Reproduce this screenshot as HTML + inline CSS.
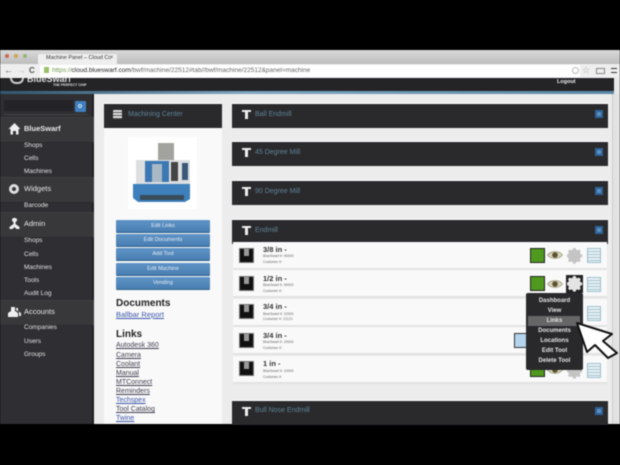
<!DOCTYPE html>
<html><head><meta charset="utf-8"><style>
html,body{margin:0;padding:0;background:#000}
#p{position:relative;width:620px;height:465px;overflow:hidden;background:#000;font-family:"Liberation Sans",sans-serif;filter:blur(.45px)}
#p div,#p a{position:absolute;white-space:nowrap}
.side{color:#e2e2e2;font-size:6.5px;line-height:10px;left:24px}
.main{color:#e8e8e8;font-size:7.500px;line-height:12px;left:24px}
.sec{left:0;width:94px;background:#38383b;border-top:1px solid #3f3f42;border-bottom:1px solid #29292c;height:24px}
.ph{left:232px;width:376px;height:24px;background:#2a2a2d;border-top:1px solid #fff}
.pt{color:#5f8496;font-size:7px;line-height:12px;left:255px}
.pb{left:595px;width:8px;height:8px;background:#5c8fbe;box-shadow:inset 0 0 0 2px #2f6399}
.tv{left:242px;width:9px;height:2px;background:#eee}
.tu{left:245px;width:3px;height:9px;background:#eee}
.btn{left:116px;width:94px;height:12px;background:linear-gradient(#5f94c6,#477db1);border:0;border-radius:1px;color:#e8eef6;font-size:5.5px;line-height:12px;text-align:center;box-shadow:0 1px 0 #2f5f8c}
.lnk{left:116px;color:#3e3e50;font-size:7px;line-height:9px;text-decoration:underline}
.row{left:233px;width:374px;height:26px;background:#f9f9f9;border-bottom:2px solid #e2e2e2}
.ic{left:239px;width:15px;height:15px;background:#111;border:1px solid #777;box-sizing:border-box}
.ic i{position:absolute;left:4px;top:0;width:5px;height:7px;background:#999}
.t1{left:263px;font-size:7.5px;color:#333;line-height:9px;font-weight:bold}
.t2{left:263px;font-size:3.5px;color:#666;line-height:6px}
.gr{left:530px;width:15px;height:15px;background:#4f9a1e;border:1px solid #222;box-sizing:border-box}
.doc{left:587px;width:14px;height:15px;background:repeating-linear-gradient(#e8f2f6 0 2px,#a5c4d0 2px 3px);border:1px solid #9fbfcc;box-sizing:border-box}
.mi{left:527px;width:55px;text-align:center;color:#e4e4e4;font-size:6px;line-height:10px;font-weight:bold}
svg{position:absolute}
</style></head><body>
<svg width="0" height="0" style="position:absolute"><defs>
<g id="eye"><path d="M0.500 5C4 0.500 12 0.500 15.500 5C12 9.500 4 9.500 0.500 5Z" fill="#d9d5ba" stroke="#aaa68c"/><circle cx="8" cy="5" r="2.800" fill="#5d5233"/></g>
<g id="gear"><path d="M6 0h3l.5 2 1.700.7 1.800-1 2 2-1 1.800.7 1.700 2 .5v3l-2 .5-.7 1.700 1 1.800-2 2-1.800-1-1.700.7-.5 2H6l-.5-2-1.700-.7-1.800 1-2-2 1-1.800-.7-1.700-2-.5v-3l2-.5.7-1.700-1-1.800 2-2 1.800 1 1.700-.7z" transform="translate(1 0) scale(.85)"/></g>
</defs></svg>
<div id="p">
<div style="left:0;top:50px;width:620px;height:14px;background:linear-gradient(#dadada,#bcbcbc)"></div>
<div style="left:0;top:64px;width:620px;height:14px;background:#eee"></div>
<div style="left:5px;top:54px;width:4px;height:4px;border-radius:50%;background:#c8685e"></div>
<div style="left:14px;top:54px;width:4px;height:4px;border-radius:50%;background:#cfa34f"></div>
<div style="left:23px;top:54px;width:4px;height:4px;border-radius:50%;background:#9ab27c"></div>
<div style="left:38px;top:54px;width:79px;height:10px;background:#eee;border-radius:2px 2px 0 0"></div>
<div style="left:46px;top:54px;font-size:5.5px;line-height:9px;color:#333">Machine Panel – Cloud Co</div>
<div style="left:110px;top:54px;font-size:6px;line-height:9px;color:#777">×</div>
<div style="left:4px;top:65px;font-size:9px;line-height:11px;color:#555">←</div>
<div style="left:17px;top:65px;font-size:9px;line-height:11px;color:#bbb">→</div>
<div style="left:29px;top:65px;font-size:8px;line-height:11px;color:#555;font-weight:bold">C</div>
<div style="left:40px;top:65px;width:540px;height:12px;background:#fff"></div>
<div style="left:44px;top:67px;width:5px;height:6px;background:#9bbf6a"></div>
<div style="left:52px;top:66px;font-size:6.5px;line-height:10px;color:#666"><span style="color:#6f9a4e">https://</span><span style="color:#222">cloud.blueswarf.com</span>/bwf/machine/22512#tab//bwf/machine/22512&amp;panel=machine</div>
<div style="left:572px;top:67px;width:7px;height:7px;border:1px solid #bbb;box-sizing:border-box;border-radius:50%"></div>
<div style="left:582px;top:64px;font-size:9px;line-height:12px;color:#aaa">☆</div>
<div style="left:596px;top:68px;width:9px;height:6px;border:1px solid #888;box-sizing:border-box"></div>
<div style="left:611px;top:68px;width:6px;height:5px;border-top:1px solid #333;border-bottom:1px solid #333;box-sizing:border-box"></div>
<div style="left:0;top:78px;width:614px;height:14px;background:#242427"></div>
<div style="left:0;top:91px;width:614px;height:3px;background:linear-gradient(90deg,#31566e,#7ea6c2 40%,#5b88a8)"></div>
<div style="left:10px;top:78px;width:14px;height:6px;border:2px solid #ccc;border-top:0;border-radius:0 0 9px 9px;box-sizing:border-box"></div>
<div style="left:27px;top:78px;width:60px;height:5px;overflow:hidden"><div style="left:0;top:-4px;font-size:9px;font-weight:bold;line-height:10px;color:#ddd">BlueSwarf</div></div>
<div style="left:53px;top:83px;font-size:3.5px;font-weight:bold;line-height:5px;color:#ddd">THE PERFECT CHIP</div>
<div style="left:557px;top:78px;font-size:5.5px;line-height:9px;color:#eee;font-weight:bold">Logout</div>
<div style="left:94px;top:94px;width:526px;height:330px;background:#ececec"></div>
<div style="left:614px;top:78px;width:6px;height:16px;background:#e8e8e8"></div>
<div style="left:612px;top:94px;width:8px;height:330px;background:#e2e2e2;border-left:1px solid #ccc;box-sizing:border-box"></div>
<div style="left:0;top:94px;width:92px;height:330px;background:#2f2f33"></div>
<div style="left:92px;top:94px;width:2px;height:330px;background:#1f1f22"></div>
<div style="left:4px;top:100px;width:69px;height:11px;background:#242428"></div>
<div style="left:75px;top:101px;width:11px;height:11px;background:#3f7fc0;border-radius:1px"></div>
<div style="left:78px;top:104px;width:4px;height:4px;border:1px solid #cfe3f5;border-radius:50%;box-sizing:border-box"></div>
<div style="left:4px;top:114px;width:84px;height:1px;background:#444"></div>
<div class="sec" style="top:117px"></div><div class="main" style="top:123px;font-weight:bold">BlueSwarf</div>
<svg style="left:8px;top:122px" width="13" height="13" viewBox="0 0 13 13"><path d="M6.500 1L0.500 7H2.500V12.500H5V9H8V12.500H10.500V7H12.500Z" fill="#eee"/></svg>
<div class="side" style="top:141px">Shops</div><div class="side" style="top:154px">Cells</div><div class="side" style="top:167px">Machines</div>
<div class="sec" style="top:177px"></div><div class="main" style="top:183px">Widgets</div>
<div style="left:9px;top:184px;width:10px;height:10px;border:3px solid #ddd;border-radius:50%;box-sizing:border-box"></div>
<div class="side" style="top:201px">Barcode</div>
<div class="sec" style="top:212px"></div><div class="main" style="top:218px">Admin</div>
<svg style="left:8px;top:217px" width="13" height="13" viewBox="0 0 13 13"><path d="M6.500 1a2 2 0 0 1 1 4v2l4 3v2h-3l-2-2-2 2h-3v-2l4-3v-2a2 2 0 0 1 1-4z" fill="#eee"/></svg>
<div class="side" style="top:236px">Shops</div><div class="side" style="top:250px">Cells</div><div class="side" style="top:263px">Machines</div><div class="side" style="top:276px">Tools</div><div class="side" style="top:289px">Audit Log</div>
<div class="sec" style="top:300px"></div><div class="main" style="top:306px">Accounts</div>
<svg style="left:8px;top:307px" width="13" height="11" viewBox="0 0 13 11"><path d="M3 0h4v4l3 2v4H0V6l3-2zM8 1h2v3l3 2v3h-2V5L8 3z" fill="#eee"/></svg>
<div class="side" style="top:323px">Companies</div><div class="side" style="top:337px">Users</div><div class="side" style="top:350px">Groups</div>
<div style="left:104px;top:103px;width:118px;height:321px;background:#f9f9f9"></div>
<div class="ph" style="left:104px;top:103px;width:118px"></div>
<div style="left:113px;top:110px;width:9px;height:9px;background:repeating-linear-gradient(#ddd 0 2px,#555 2px 3px);border-radius:1px"></div>
<div class="pt" style="left:128px;top:109px">Machining Center</div>
<div style="left:128px;top:137px;width:69px;height:72px;background:#fff"></div>
<svg style="left:130px;top:140px" width="65" height="66" viewBox="0 0 65 66">
<rect x="28" y="3" width="16" height="24" fill="#a2a29e"/><rect x="6" y="20" width="54" height="28" fill="#dcdee0"/>
<rect x="15" y="21" width="24" height="21" fill="#3c78b4"/><rect x="22" y="24" width="10" height="18" fill="#a8b8c4"/>
<rect x="41" y="22" width="7" height="19" fill="#444"/><rect x="52" y="23" width="6" height="17" fill="#3a5878"/>
<path d="M3 44H60V59L55 62H8L3 58Z" fill="#3d80bc"/><rect x="10" y="55" width="44" height="5" fill="#3a4c5a"/></svg>
<div class="btn" style="top:220px">Edit Links</div>
<div class="btn" style="top:234px">Edit Documents</div>
<div class="btn" style="top:248px">Add Tool</div>
<div class="btn" style="top:263px">Edit Machine</div>
<div class="btn" style="top:277px">Vending</div>
<div style="left:116px;top:298px;font-size:10px;font-weight:bold;line-height:12px;color:#222">Documents</div>
<a style="left:116px;top:310px;font-size:7.500px;line-height:10px;color:#3a55a8;text-decoration:underline">Ballbar Report</a>
<div style="left:116px;top:329px;font-size:10px;font-weight:bold;line-height:12px;color:#222">Links</div>
<a class="lnk" style="top:341px">Autodesk 360</a><a class="lnk" style="top:351px">Camera</a><a class="lnk" style="top:360px">Coolant</a><a class="lnk" style="top:369px">Manual</a><a class="lnk" style="top:378px">MTConnect</a><a class="lnk" style="top:387px">Reminders</a><a class="lnk" style="top:396px;color:#3a55a8">Techspex</a><a class="lnk" style="top:405px">Tool Catalog</a><a class="lnk" style="top:414px;color:#3a55a8">Twine</a>
<div class="ph" style="top:103px"></div><div class="pt" style="top:109px">Ball Endmill</div><div class="pb" style="top:110px"></div>
<div class="ph" style="top:141px"></div><div class="pt" style="top:147px">45 Degree Mill</div><div class="pb" style="top:148px"></div>
<div class="ph" style="top:180px"></div><div class="pt" style="top:186px">90 Degree Mill</div><div class="pb" style="top:187px"></div>
<div class="ph" style="top:219px"></div><div class="pt" style="top:225px">Endmill</div><div class="pb" style="top:226px"></div>
<div class="ph" style="top:400px"></div><div class="pt" style="top:405px">Bull Nose Endmill</div><div class="pb" style="top:407px"></div>
<div class="tv" style="top:110px"></div><div class="tu" style="top:110px"></div>
<div class="tv" style="top:148px"></div><div class="tu" style="top:148px"></div>
<div class="tv" style="top:187px"></div><div class="tu" style="top:187px"></div>
<div class="tv" style="top:226px"></div><div class="tu" style="top:226px"></div>
<div class="tv" style="top:407px"></div><div class="tu" style="top:407px"></div>
<div class="row" style="top:242px"></div><div class="row" style="top:270px"></div><div class="row" style="top:299px"></div><div class="row" style="top:327px"></div><div class="row" style="top:356px"></div>
<div class="ic" style="top:248px"><i></i></div><div class="ic" style="top:276px"><i></i></div><div class="ic" style="top:304px"><i></i></div><div class="ic" style="top:333px"><i></i></div><div class="ic" style="top:361px"><i></i></div>
<div class="t1" style="top:245px">3/8 in -</div><div class="t2" style="top:253px">BlueSwarf #: 90000</div><div class="t2" style="top:259px">Customer #:</div>
<div class="t1" style="top:274px">1/2 in -</div><div class="t2" style="top:282px">BlueSwarf #: 90000</div><div class="t2" style="top:288px">Customer #:</div>
<div class="t1" style="top:302px">3/4 in -</div><div class="t2" style="top:311px">BlueSwarf #: 22000</div><div class="t2" style="top:316px">Customer #: 12121</div>
<div class="t1" style="top:331px">3/4 in -</div><div class="t2" style="top:339px">BlueSwarf #: 20000</div><div class="t2" style="top:345px">Customer #:</div>
<div class="t1" style="top:359px">1 in -</div><div class="t2" style="top:368px">BlueSwarf #: 10000</div><div class="t2" style="top:374px">Customer #:</div>
<div class="gr" style="top:248px"></div><svg style="left:547px;top:250px" width="16" height="10"><use href="#eye"/></svg><svg style="left:567px;top:248px" width="16" height="16" fill="#c4c4c4"><use href="#gear"/></svg><div class="doc" style="top:248px"></div>
<div class="gr" style="top:276px"></div><svg style="left:547px;top:279px" width="16" height="10"><use href="#eye"/></svg>
<div style="left:566px;top:275px;width:17px;height:18px;background:#222"></div><svg style="left:567px;top:276px" width="16" height="16" fill="#e4e4e4"><use href="#gear"/></svg>
<div class="doc" style="top:277px"></div><div class="doc" style="top:306px"></div>
<div style="left:514px;top:333px;width:15px;height:15px;background:#b4d4ee;border:1px solid #333;box-sizing:border-box"></div>
<div class="gr" style="top:362px"></div><svg style="left:547px;top:365px" width="16" height="10"><use href="#eye"/></svg><svg style="left:567px;top:363px" width="16" height="16" fill="#c4c4c4"><use href="#gear"/></svg><div class="doc" style="top:363px"></div>
<div style="left:526px;top:293px;width:57px;height:77px;background:#29292c;border-radius:2px"></div>
<div style="left:528px;top:316px;width:52px;height:10px;background:#666"></div>
<div class="mi" style="top:296px">Dashboard</div><div class="mi" style="top:306px">View</div><div class="mi" style="top:316px">Links</div><div class="mi" style="top:326px">Documents</div><div class="mi" style="top:336px">Locations</div><div class="mi" style="top:346px">Edit Tool</div><div class="mi" style="top:356px">Delete Tool</div>
<svg style="left:575px;top:321px" width="45" height="40" viewBox="0 0 45 40"><path d="M2 2L37 13L28 20L42 32L33 37L20 24L12 31Z" fill="#fff" stroke="#111" stroke-width="2" stroke-linejoin="round"/></svg>
</div></body></html>
